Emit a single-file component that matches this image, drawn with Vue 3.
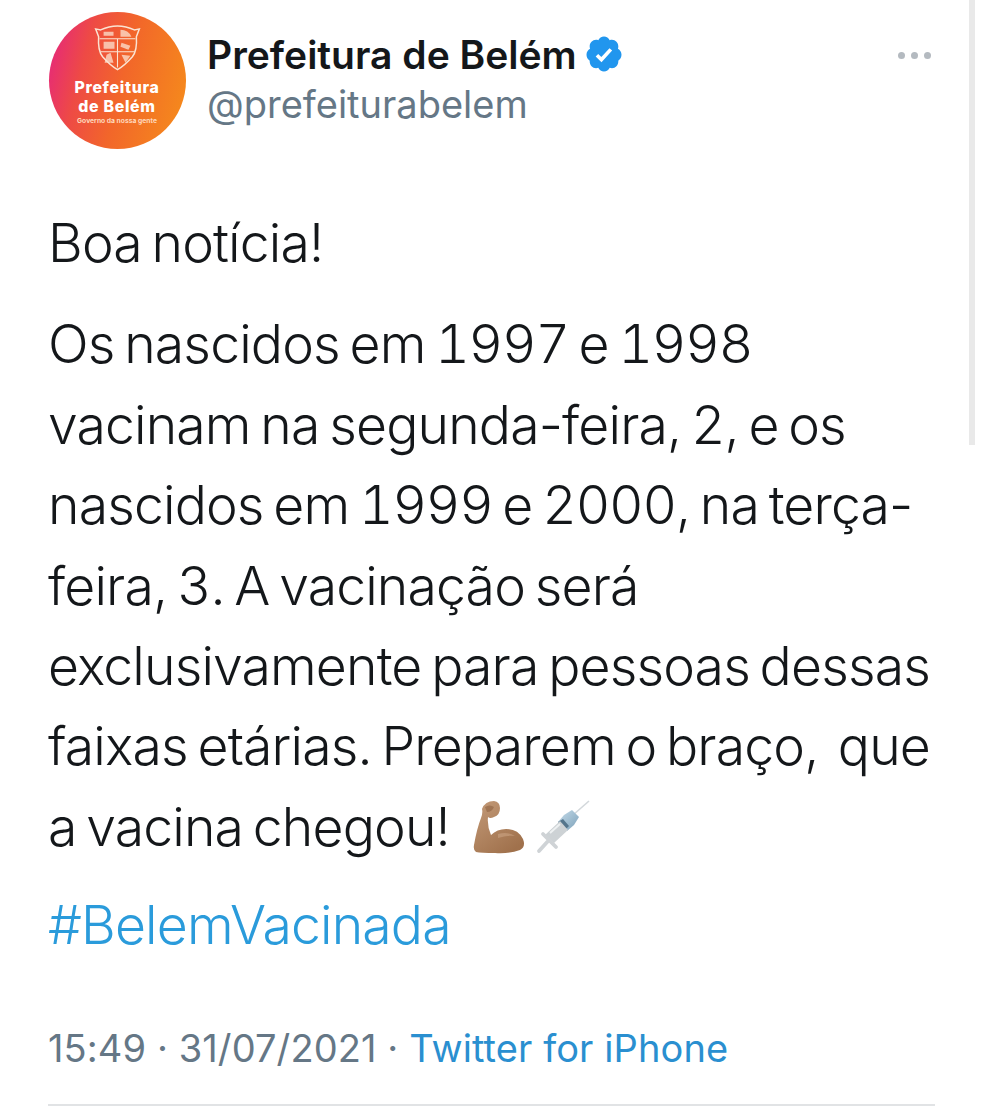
<script setup>
const lines = [
  'Os nascidos em 1997 e 1998',
  'vacinam na segunda-feira, 2, e os',
  'nascidos em 1999 e 2000, na terça-',
  'feira, 3. A vacinação será',
  'exclusivamente para pessoas dessas',
  'faixas etárias. Preparem o braço,\u00a0 que',
].map((text) => text.split(/(\d+)/))
</script>

<template>
  <main class="page">
    <div class="scrollbar"></div>
    <header class="head">
      <svg class="avatar" viewBox="0 0 140 140" role="img" aria-label="Prefeitura de Belém">
        <defs>
          <linearGradient id="av" x1="0" y1="0.3" x2="1" y2="0.55">
            <stop offset="0" stop-color="#e62a78" />
            <stop offset="0.25" stop-color="#ee4a45" />
            <stop offset="0.55" stop-color="#f2662a" />
            <stop offset="1" stop-color="#f5871d" />
          </linearGradient>
        </defs>
        <circle cx="70" cy="70" r="69" fill="url(#av)" />
        <path d="M53 19 Q70 11 87 19 L92 18 L89 26 Q90 40 85 46 Q77 55 70 59 Q63 55 55 46 Q50 40 51 26 L48 18 Z" fill="none" stroke="#fbe3d2" stroke-width="1.5" />
        <path d="M52 28 H88 M70 28 V57 M53 41 H87" stroke="#fbe3d2" stroke-width="1.1" fill="none" />
        <path d="M56 21 h10 v4 h-10z M73 19 q8 0 11 7 h-11z M56 31 h11 v7 h-11z M59 44 l4 -2 l3 10 h-9z M74 32 l9 3 l-2 4 l-8 -3z M74 44 l9 1 l-5 7z" fill="#fbe3d2" opacity=".75" />
        <text x="69.5" y="83" class="av-big">Prefeitura</text>
        <text x="69.5" y="102" class="av-big">de Belém</text>
        <text x="69.5" y="112.5" class="av-small">Governo da nossa gente</text>
      </svg>
      <div class="names">
        <div class="name-row">
          <span class="name">Prefeitura de Belém</span>
          <svg class="badge" viewBox="0 0 24 24" aria-label="Verificado">
            <path fill="#2196ee" d="M22.5 12.5c0-1.58-.875-2.95-2.148-3.6.154-.435.238-.905.238-1.4 0-2.21-1.71-3.998-3.818-3.998-.47 0-.92.084-1.336.25C14.818 2.415 13.51 1.5 12 1.5s-2.816.917-3.437 2.25c-.415-.165-.866-.25-1.336-.25-2.11 0-3.818 1.79-3.818 4 0 .494.083.964.237 1.4-1.272.65-2.147 2.018-2.147 3.6 0 1.495.782 2.798 1.942 3.486-.02.17-.032.34-.032.514 0 2.21 1.708 4 3.818 4 .47 0 .92-.086 1.335-.25.62 1.334 1.926 2.25 3.437 2.25 1.512 0 2.818-.916 3.437-2.25.415.163.865.248 1.336.248 2.11 0 3.818-1.79 3.818-4 0-.174-.012-.344-.033-.513 1.158-.687 1.943-1.99 1.943-3.484z" />
            <path fill="#fff" d="M10.5 16.9 7 13.5l1.5-1.5 1.9 1.8 4.9-5.3 1.6 1.4z" />
          </svg>
        </div>
        <div class="handle">@prefeiturabelem</div>
      </div>
      <div class="more" aria-label="Mais opções"><i></i><i></i><i></i></div>
    </header>

    <section class="tweet">
      <p class="first">Boa notícia!</p>
      <div class="para">
        <div v-for="(parts, i) in lines" :key="i" class="line">
          <span v-for="(part, j) in parts" :key="j" :class="{ num: j % 2 === 1 }">{{ part }}</span>
        </div>
        <div class="line emoji-line">
          <span>a vacina chegou!</span>
          <svg class="emoji arm" viewBox="0 0 54 54" aria-label="Braço">
            <defs>
              <linearGradient id="armg" x1="0" y1="0" x2="0.7" y2="1">
                <stop offset="0" stop-color="#c39a78" />
                <stop offset="1" stop-color="#a0714c" />
              </linearGradient>
            </defs>
            <path fill="url(#armg)" d="M9 9 Q12 1 21 1 Q27 2 27 8 Q27 15 21 17 Q17 19 15 17 Q14 26 18 35 Q24 29 33 29 Q45 29 50 39 Q53 47 47 50 Q36 54 22 53 Q8 53 3 52 Q0 50 1 45 Q4 28 8 18 Q10 13 9 9 Z" />
            <path fill="#85593a" opacity=".5" d="M12 7 q5 -3 9 0 q-2 5 -7 5z" />
            <path fill="#d2ac8c" opacity=".5" d="M25 34 Q34 31 42 36 Q34 35 25 38z" />
          </svg>
          <svg class="emoji syr" viewBox="0 0 54 54" aria-label="Seringa">
            <defs>
              <linearGradient id="barrel" x1="0" y1="0" x2="1" y2="1">
                <stop offset="0" stop-color="#c6dcea" />
                <stop offset="1" stop-color="#7ba0b8" />
              </linearGradient>
            </defs>
            <path d="M37 15 L53 1" stroke="#d3d8db" stroke-width="1.6" />
            <path fill="url(#barrel)" d="M28 15 L36 10 L43 17 L38 25 L31 31 L22 22 Z" />
            <path fill="#54758c" d="M22 22 L27 19 L33 26 L29 30 Z" />
            <path fill="#cdd2d5" d="M9 35 L24 21 L32 30 L18 43 Z" />
            <path d="M14 33 L24 24" stroke="#eef1f2" stroke-width="2" />
            <path d="M7 34 L20 47 M13 40 L3 51" stroke="#cfd3d6" stroke-width="3.8" stroke-linecap="round" />
          </svg>
        </div>
      </div>
      <p class="tag">#BelemVacinada</p>
    </section>

    <footer class="meta">
      <span>15:49 · 31/07/2021 · </span><span class="source">Twitter for iPhone</span>
    </footer>
    <div class="rule"></div>
  </main>
</template>

<style scoped>
.page {
  position: relative;
  width: 984px;
  height: 1117px;
  box-sizing: border-box;
  padding: 11px 49px 0 48px;
  background: #fff;
  overflow: hidden;
  font-family: Inter, "Liberation Sans", sans-serif;
  color: #14171a;
}
.scrollbar {
  position: absolute;
  top: 0;
  left: 969px;
  width: 6px;
  height: 445px;
  background: #e9e9e9;
}
.head {
  display: flex;
  align-items: flex-start;
  height: 138px;
}
.avatar {
  width: 139px;
  height: 139px;
  flex: none;
}
.av-big {
  font: 800 16px Inter, sans-serif;
  letter-spacing: 0.7px;
  fill: #fff;
  text-anchor: middle;
}
.av-small {
  font: 700 6.8px Inter, sans-serif;
  fill: #ffd9bd;
  text-anchor: middle;
}
.names {
  margin-left: 20px;
  padding-top: 21px;
  flex: 1;
}
.name-row {
  display: flex;
  align-items: center;
  height: 44px;
  gap: 8px;
}
.name {
  font-size: 39px;
  font-weight: 600;
  letter-spacing: 0;
  color: #14171a;
  white-space: nowrap;
}
.badge {
  width: 40px;
  height: 40px;
  flex: none;
  margin-left: -1px;
}
.handle {
  margin-top: 6px;
  font-size: 38px;
  line-height: 44px;
  letter-spacing: 0;
  color: #657786;
}
.more {
  display: flex;
  gap: 6px;
  margin-top: 41px;
  margin-right: 4px;
}
.more i {
  width: 7px;
  height: 7px;
  border-radius: 50%;
  background: #b4bac0;
}
.tweet {
  margin-top: 54px;
  font-size: 53.5px;
  font-weight: 350;
  line-height: 80.4px;
  letter-spacing: -0.85px;
  word-spacing: -4.5px;
  white-space: nowrap;
}
.num {
  font-variant-numeric: tabular-nums;
  letter-spacing: -1.2px;
}
.first,
.tag {
  margin: 0;
}
.para {
  margin-top: 21px;
}
.emoji-line {
  display: flex;
  align-items: center;
}
.emoji {
  width: 54px;
  height: 54px;
  flex: none;
}
.arm {
  margin-left: 23px;
}
.syr {
  margin-left: 9px;
}
.tag {
  margin-top: 18px;
  color: #2a9bdb;
}
.meta {
  margin-top: 59px;
  font-size: 38px;
  line-height: 46px;
  letter-spacing: 0.1px;
  color: #657786;
  white-space: nowrap;
}
.source {
  color: #2a8fd0;
}
.rule {
  margin-top: 33px;
  height: 2px;
  background: #e1e3e5;
}
</style>
